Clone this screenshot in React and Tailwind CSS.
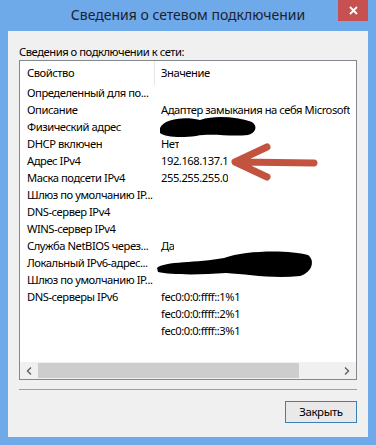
const rows = [
	['Определенный для по...', ''],
	['Описание', 'Адаптер замыкания на себя Microsoft'],
	['Физический адрес', ''],
	['DHCP включен', 'Нет'],
	['Адрес IPv4', '192.168.137.1'],
	['Маска подсети IPv4', '255.255.255.0'],
	['Шлюз по умолчанию IP...', ''],
	['DNS-сервер IPv4', ''],
	['WINS-сервер IPv4', ''],
	['Служба NetBIOS через...', 'Да'],
	['Локальный IPv6-адрес...', ''],
	['Шлюз по умолчанию IP...', ''],
	['DNS-серверы IPv6', 'fec0:0:0:ffff::1%1'],
	['', 'fec0:0:0:ffff::2%1'],
	['', 'fec0:0:0:ffff::3%1'],
];

const App = () => {
	return (
		<div className="relative w-[376px] h-[445px] bg-[#6ea9ea] flex flex-col font-['Noto_Sans',sans-serif] text-[11.2px] tracking-[-0.45px] text-black overflow-hidden">
			{/* Title bar */}
			<div className="relative h-[31px] flex items-center justify-center">
				<span className="text-[14px] tracking-normal text-[#1c2230] leading-none -mt-[1px]">Сведения о сетевом подключении</span>
				<div className="absolute right-[8px] top-0 w-[30px] h-[21px] bg-[#c75050] flex items-center justify-center">
					<svg width="9" height="9" viewBox="0 0 9 9">
						<path d="M1 1 L8 8 M8 1 L1 8" stroke="#fff" strokeWidth="1.8" />
					</svg>
				</div>
			</div>

			{/* Dialog body */}
			<div className="flex-1 mx-[8px] mb-[8px] bg-[#f0f0f0] flex flex-col px-[11px]">
				<div className="h-[29px] flex items-center pt-[13px] leading-none">Сведения о подключении к сети:</div>

				{/* List box */}
				<div className="h-[320px] border border-[#828790] bg-white flex flex-col">
					<div className="h-[24px] flex items-center shrink-0">
						<div className="w-[135px] h-full pl-[7px] flex items-center border-r border-[#e5e5e5]">Свойство</div>
						<div className="pl-[6px]">Значение</div>
					</div>
					<div className="flex-1 overflow-hidden">
						{rows.map((row, i) => (
							<div key={i} className="h-[17px] flex items-center whitespace-nowrap">
								<div className="w-[135px] pl-[7px] shrink-0 overflow-hidden">{row[0]}</div>
								<div className="pl-[6px] overflow-hidden">{row[1]}</div>
							</div>
						))}
					</div>
					{/* Horizontal scrollbar */}
					<div className="h-[17px] bg-[#f0f0f0] flex items-center shrink-0">
						<div className="w-[18px] flex justify-center">
							<svg width="6" height="8" viewBox="0 0 6 8">
								<path d="M5 0.5 L1.5 4 L5 7.5" stroke="#606060" strokeWidth="1.4" fill="none" />
							</svg>
						</div>
						<div className="w-[261px] h-[15px] bg-[#cdcdcd]" />
						<div className="flex-1 flex justify-end pr-[6px]">
							<svg width="6" height="8" viewBox="0 0 6 8">
								<path d="M1 0.5 L4.5 4 L1 7.5" stroke="#606060" strokeWidth="1.4" fill="none" />
							</svg>
						</div>
					</div>
				</div>

				<div className="mt-[9px] h-px bg-[#a0a0a0]" />

				<div className="flex justify-end mt-[11px]">
					<button className="w-[72px] h-[22px] border border-[#3c7fb1] bg-[#e9e9e9] text-[11.5px] leading-none">Закрыть</button>
				</div>
			</div>

			{/* Annotations over the screenshot */}
			<svg className="absolute inset-0 pointer-events-none" width="376" height="445" viewBox="0 0 376 445">
				<path
					d="M160 128 C164 119 184 116 200 120 C216 115 236 117 252 122 C258 126 256 133 248 135 C230 137 212 133 196 136 C180 138 165 137 160 133 Z"
					fill="#000"
				/>
				<path
					d="M157 268 C164 261 198 263 224 258 C246 250 290 250 308 255 C315 260 313 272 300 276 C272 279 246 274 226 273 C200 275 170 275 158 272 Z"
					fill="#000"
				/>
				<path d="M314 163 L238 162 M267 147 L235 162 L267 177" stroke="#c2533f" strokeWidth="7" strokeLinecap="round" strokeLinejoin="round" fill="none" />
			</svg>
		</div>
	);
};

export default App;
